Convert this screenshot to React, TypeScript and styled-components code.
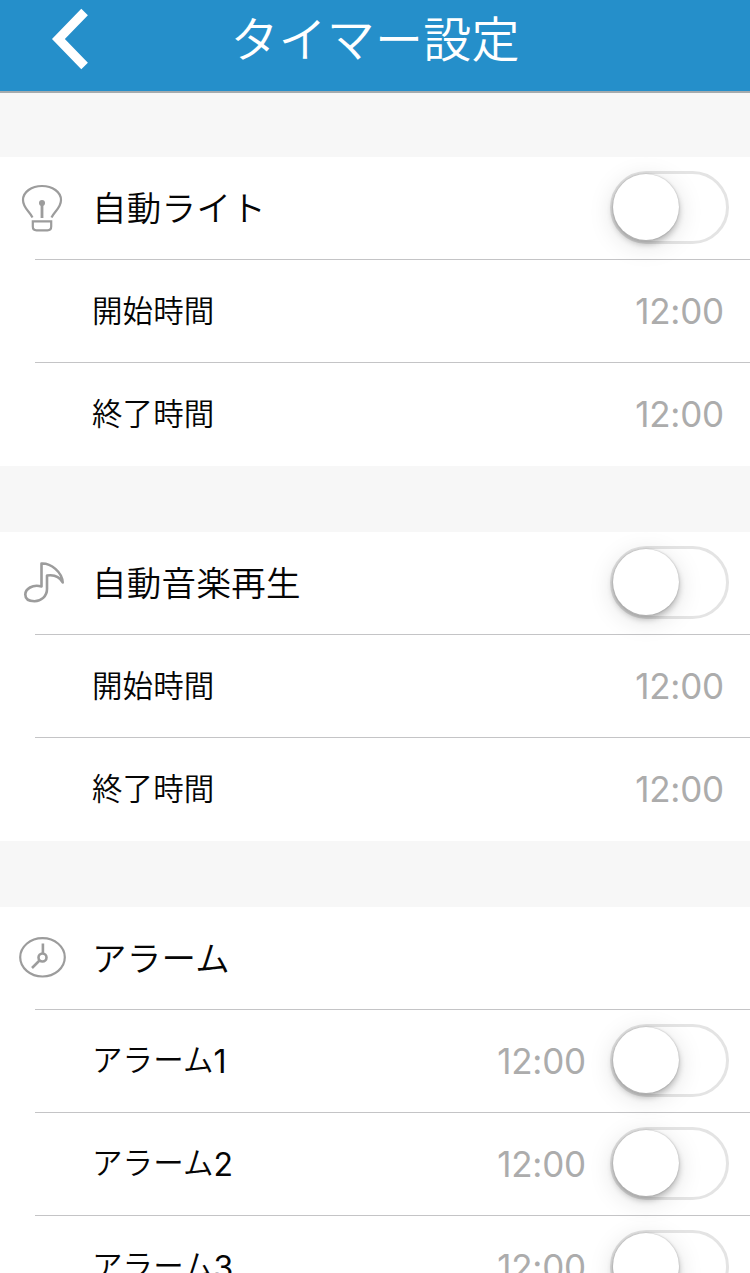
import React from 'react';
import styled, { createGlobalStyle } from 'styled-components';

const GlobalStyle = createGlobalStyle`
  * { box-sizing: border-box; }
  html, body { margin: 0; padding: 0; }
  body {
    background: #f7f7f7;
    font-family: 'Noto Sans CJK JP', 'Noto Sans', sans-serif;
    color: #050505;
  }
`;

const Screen = styled.main`
  width: 750px;
  height: 1273px;
  overflow: hidden;
  background: #f7f7f7;
`;

const Header = styled.header`
  display: grid;
  grid-template-columns: 140px 1fr 140px;
  align-items: center;
  height: 93px;
  padding-bottom: 13px;
  margin-bottom: 64px;
  background: #258fca;
  border-bottom: 2px solid #a5abae;
`;

const BackButton = styled.button`
  display: flex;
  padding: 0;
  margin-left: 50px;
  width: 40px;
  border: 0;
  background: none;
`;

const Title = styled.h1`
  margin: 0;
  padding-bottom: 6px;
  text-align: center;
  white-space: nowrap;
  font-size: 48px;
  line-height: 72px;
  font-weight: 350;
  letter-spacing: 0.2px;
  color: #fff;
`;

const Section = styled.section`
  background: #fff;
  margin-bottom: 66px;
`;

const Row = styled.div<{ $last?: boolean }>`
  display: flex;
  align-items: center;
  height: 103px;
  margin-left: 35px;
  padding-right: 21px;
  border-bottom: 1px solid ${(p) => (p.$last ? 'transparent' : '#c4c4c6')};
`;

const IconSlot = styled.span`
  display: flex;
  flex: none;
  width: 74px;
  margin-left: -17px;
  svg { display: block; }
`;

const Label = styled.span<{ $heading?: boolean }>`
  flex: 1;
  display: flex;
  align-items: baseline;
  padding-left: ${(p) => (p.$heading ? '0' : '57px')};
  padding-bottom: 4px;
  font-size: ${(p) => (p.$heading ? '34.5px' : '30.5px')};
  font-weight: 350;
  letter-spacing: ${(p) => (p.$heading ? '0.3px' : '0.1px')};
  line-height: 50px;
  white-space: nowrap;
`;

const Index = styled.span`
  font-family: Inter, sans-serif;
  font-size: 32px;
  font-weight: 400;
  letter-spacing: 0;
  transform: translateY(2px);
`;

const Time = styled.time<{ $beforeSwitch?: boolean }>`
  font-family: Inter, sans-serif;
  font-size: 35px;
  line-height: 50px;
  letter-spacing: -0.2px;
  color: #acacac;
  margin-right: ${(p) => (p.$beforeSwitch ? '24px' : '5px')};
`;

const Track = styled.button`
  flex: none;
  width: 119px;
  height: 73px;
  padding: 0;
  margin-top: -1px;
  border: 3px solid #e4e4e4;
  border-radius: 37px;
  background: #fff;
`;

const Thumb = styled.span`
  display: block;
  width: 66px;
  height: 66px;
  margin-top: -1px;
  border-radius: 50%;
  background: #fff;
  box-shadow: 0 4px 6px rgba(0, 0, 0, 0.24), 0 0 2px rgba(0, 0, 0, 0.24),
    0 5px 26px rgba(0, 0, 0, 0.13);
`;

const Switch = () => (
  <Track type="button" role="switch" aria-checked="false">
    <Thumb />
  </Track>
);

const BackIcon = () => (
  <svg width="40" height="64" viewBox="0 0 40 64" fill="none">
    <path d="M34.6 5L8.4 32L34.600 59" stroke="#fff" strokeWidth="9.200" />
  </svg>
);

const BulbIcon = () => (
  <svg width="48" height="50" viewBox="0 0 48 50" fill="none" stroke="#9c9c9c" strokeWidth="2.200">
    <path d="M14.500 34.500C11.500 28 5 25 5 17C5 9 13.500 3 24 3S43 9 43 17C43 25 36.500 28 33.500 34.500" />
    <path d="M24 19V35" strokeWidth="2.800" />
    <circle cx="24" cy="20" r="3" fill="#9c9c9c" stroke="none" />
    <path d="M14.800 38.300H33.200V43.500Q33.200 47.300 29.500 47.300H18.500Q14.800 47.300 14.800 43.500Z" />
  </svg>
);

const NoteIcon = () => (
  <svg width="48" height="50" viewBox="0 0 48 50" fill="none" stroke="#9c9c9c" strokeWidth="2.600" strokeLinejoin="round">
    <path d="M23.500 28.500V5.500C33 5 44 14 44.700 24.500C41.500 18.500 35.500 16.500 29 17.500V31C29 38.500 23 43.200 16.500 43.200C10.500 43.200 7.300 40.500 7.300 36.500C7.300 31 14.500 26 23.500 28.500Z" />
  </svg>
);

const ClockIcon = () => (
  <svg width="48" height="50" viewBox="0 0 48 50" fill="none" stroke="#9c9c9c" strokeWidth="2.200">
    <ellipse cx="24.500" cy="24.300" rx="22.300" ry="19.200" />
    <circle cx="24.500" cy="24.500" r="4" strokeWidth="2.600" />
    <path d="M24.900 10.500V20.500M21.500 27.500L14 35" strokeWidth="2.600" />
  </svg>
);

const Heading = ({ icon, text, toggle }: { icon: React.ReactNode; text: string; toggle?: boolean }) => (
  <Row>
    <IconSlot>{icon}</IconSlot>
    <Label $heading>{text}</Label>
    {toggle && <Switch />}
  </Row>
);

const TimeRows = () => (
  <>
    <Row>
      <Label>開始時間</Label>
      <Time>12:00</Time>
    </Row>
    <Row $last>
      <Label>終了時間</Label>
      <Time>12:00</Time>
    </Row>
  </>
);

export default function App() {
  return (
    <>
      <GlobalStyle />
      <Screen lang="ja">
        <Header>
          <BackButton type="button" aria-label="戻る">
            <BackIcon />
          </BackButton>
          <Title>タイマー設定</Title>
        </Header>
        <Section>
          <Heading icon={<BulbIcon />} text="自動ライト" toggle />
          <TimeRows />
        </Section>
        <Section>
          <Heading icon={<NoteIcon />} text="自動音楽再生" toggle />
          <TimeRows />
        </Section>
        <Section>
          <Heading icon={<ClockIcon />} text="アラーム" />
          {[1, 2, 3].map((n) => (
            <Row key={n}>
              <Label>
                アラーム<Index>{n}</Index>
              </Label>
              <Time $beforeSwitch>12:00</Time>
              <Switch />
            </Row>
          ))}
        </Section>
      </Screen>
    </>
  );
}
